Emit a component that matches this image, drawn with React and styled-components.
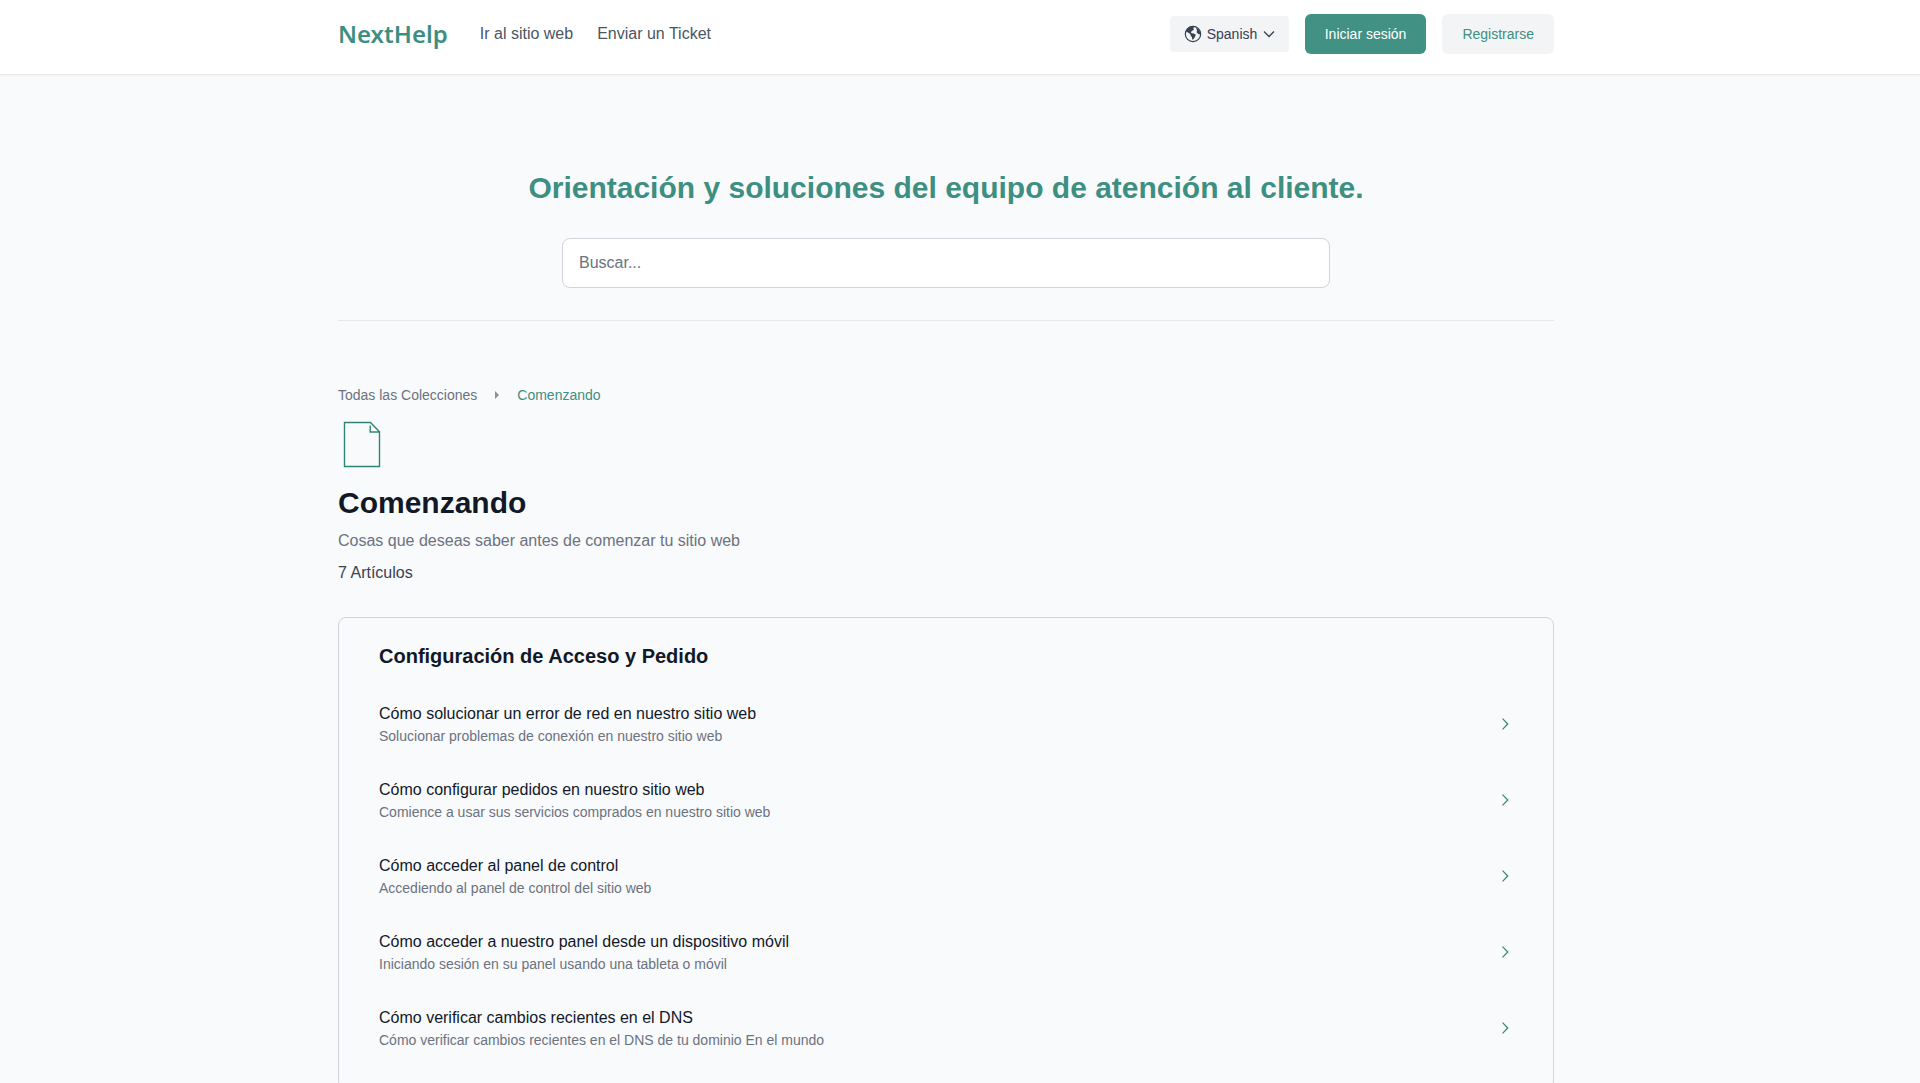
import React, { useState } from "react";

import styled, { createGlobalStyle } from "styled-components";

const GlobalStyle = createGlobalStyle`
  *, *::before, *::after {
    box-sizing: border-box;
  }

  body {
    margin: 0;
    background-color: #f9fafc;
    color: #111827;
    font-family: "Liberation Sans", Arial, sans-serif;
    font-size: 16px;
    line-height: 24px;
  }

  a {
    color: inherit;
    text-decoration: none;
  }

  h1, h2, h3, p, ul, ol {
    margin: 0;
    padding: 0;
  }

  ul, ol {
    list-style: none;
  }
`;

const Header = styled.header`
  background-color: white;
  border-bottom: 1px solid #e8e9eb;
  box-shadow: 0 1px 2px rgba(0, 0, 0, 0.04);
  padding-right: 28px;
`;

const Container = styled.div`
  max-width: 1280px;
  margin: 0 auto;
  padding: 0 32px;
`;

const HeaderInner = styled(Container)`
  display: flex;
  align-items: center;
  justify-content: space-between;
  padding-top: 14px;
  padding-bottom: 20px;
`;

const Nav = styled.nav`
  display: flex;
  align-items: center;
  gap: 24px;
  color: #4b5563;
`;

const Logo = styled.a`
  margin-right: 8px;
  color: #3d8f82;
  font-family: "Noto Sans", sans-serif;
  font-size: 24px;
  font-weight: 600;
  line-height: 32px;
`;

const Actions = styled.div`
  display: flex;
  align-items: center;
  gap: 16px;
`;

const LanguagePicker = styled.label`
  display: flex;
  align-items: center;
  gap: 5px;
  padding: 8px 14px;
  border-radius: 4px;
  background-color: #f3f4f6;
  color: #374151;

  select {
    appearance: none;
    padding: 0;
    border: none;
    background: none;
    color: inherit;
    font: inherit;
    font-size: 14px;
    line-height: 20px;
    cursor: pointer;
  }
`;

const ActionButton = styled.button`
  padding: 10px 20px;
  border: none;
  border-radius: 6px;
  background-color: ${({ $primary }) => ($primary ? "#419184" : "#f3f4f6")};
  color: ${({ $primary }) => ($primary ? "white" : "#3d8f82")};
  font: inherit;
  font-size: 14px;
  line-height: 20px;
  cursor: pointer;
`;

const Main = styled.main`
  padding-right: 28px;
`;

const Hero = styled.section`
  display: flex;
  flex-direction: column;
  align-items: center;
  padding: 93px 0 32px;
  border-bottom: 1px solid #e5e7eb;
`;

const HeroTitle = styled.h1`
  color: #3d8f82;
  font-size: 30px;
  line-height: 40px;
  text-align: center;
`;

const SearchInput = styled.input`
  width: 100%;
  max-width: 768px;
  height: 50px;
  margin-top: 30px;
  padding: 0 16px;
  border: 1px solid #d1d5db;
  border-radius: 8px;
  background-color: white;
  color: #111827;
  font: inherit;

  &::placeholder {
    color: #6b7280;
    opacity: 1;
  }
`;

const Breadcrumb = styled.ol`
  display: flex;
  align-items: center;
  gap: 16px;
  padding-top: 64px;
  color: #6b7280;
  font-size: 14px;
  line-height: 20px;

  li {
    display: flex;
    align-items: center;
    gap: 16px;
  }

  [aria-current] {
    color: #3d8f82;
  }
`;

const CollectionHeader = styled.section`
  padding: 16px 0 32px;

  svg {
    display: block;
  }
`;

const CollectionTitle = styled.h2`
  margin-top: 14px;
  font-size: 30px;
  line-height: 40px;
`;

const CollectionDescription = styled.p`
  margin-top: 6px;
  color: #6b7280;
`;

const ArticleCount = styled.p`
  margin-top: 8px;
  color: #374151;
`;

const Card = styled.section`
  padding: 22px 40px;
  border: 1px solid #d1d5db;
  border-radius: 8px;
`;

const CardTitle = styled.h3`
  margin-bottom: 14px;
  font-size: 20px;
  line-height: 32px;
`;

const ArticleLink = styled.a`
  display: flex;
  align-items: center;
  justify-content: space-between;
  padding: 16px 0;

  &:hover h4 {
    color: #3d8f82;
  }
`;

const ArticleTitle = styled.h4`
  margin: 0;
  font-size: 16px;
  font-weight: normal;
  line-height: 24px;
`;

const ArticleSummary = styled.p`
  color: #6b7280;
  font-size: 14px;
  line-height: 20px;
`;

const languages = ["Spanish", "English"];

const articles = [
  {
    title: "Cómo solucionar un error de red en nuestro sitio web",
    summary: "Solucionar problemas de conexión en nuestro sitio web",
  },
  {
    title: "Cómo configurar pedidos en nuestro sitio web",
    summary: "Comience a usar sus servicios comprados en nuestro sitio web",
  },
  {
    title: "Cómo acceder al panel de control",
    summary: "Accediendo al panel de control del sitio web",
  },
  {
    title: "Cómo acceder a nuestro panel desde un dispositivo móvil",
    summary: "Iniciando sesión en su panel usando una tableta o móvil",
  },
  {
    title: "Cómo verificar cambios recientes en el DNS",
    summary: "Cómo verificar cambios recientes en el DNS de tu dominio En el mundo",
  },
];

const GlobeIcon = () => (
  <svg width="18" height="18" viewBox="0 0 18 18" aria-hidden="true">
    <circle cx="9" cy="9" r="7.7" fill="none" stroke="currentColor" strokeWidth="1.2" />
    <path
      fill="currentColor"
      d="M1.8 6.6C2.8 3.6 5.4 1.5 8.6 1.3L10.4 1.8 9.2 3.2 10 4.4 8.4 5.8 6.8 7 7.6 8.2 9.8 8.4 11.8 9.8 11.2 11.6 9.4 14.2 8.4 14.8 7.8 12 6.6 10.6 6.2 9 4 7.6ZM12 2.8 14.6 4.2 16.3 7.4 16.2 9.6 14.2 9 12.6 7.2 13 5.4Z"
    />
  </svg>
);

const ChevronDownIcon = () => (
  <svg width="12" height="12" viewBox="0 0 12 12" fill="none" stroke="currentColor" strokeWidth="1.3" aria-hidden="true">
    <path d="M1 3.5 6 8.5 11 3.5" />
  </svg>
);

const ChevronRightIcon = () => (
  <svg width="16" height="16" viewBox="0 0 16 16" fill="none" stroke="#2f8573" strokeWidth="1.2" aria-hidden="true">
    <path d="M5.5 2.7 10.8 8 5.5 13.3" />
  </svg>
);

const CaretIcon = () => (
  <svg width="8" height="8" viewBox="0 0 8 8" fill="#8b9099" aria-hidden="true">
    <path d="M2 0 6 4 2 8Z" />
  </svg>
);

const DocumentIcon = () => (
  <svg width="48" height="48" viewBox="0 0 48 48" fill="none" stroke="#2f8573" strokeWidth="1.4" aria-hidden="true">
    <path d="M6.5 1.5H32.5L41.5 10.8V45.5H6.5ZM32.2 4.5V11H41.5" />
  </svg>
);

function App() {
  const [search, setSearch] = useState("");
  const [language, setLanguage] = useState(languages[0]);

  const renderArticle = ({ title, summary }) => (
    <li key={title}>
      <ArticleLink href="#">
        <div>
          <ArticleTitle>{title}</ArticleTitle>
          <ArticleSummary>{summary}</ArticleSummary>
        </div>
        <ChevronRightIcon />
      </ArticleLink>
    </li>
  );

  return (
    <>
      <GlobalStyle />
      <Header>
        <HeaderInner>
          <Nav>
            <Logo href="#">NextHelp</Logo>
            <a href="#">Ir al sitio web</a>
            <a href="#">Enviar un Ticket</a>
          </Nav>
          <Actions>
            <LanguagePicker>
              <GlobeIcon />
              <select aria-label="Idioma" value={language} onChange={(e) => setLanguage(e.target.value)}>
                {languages.map((name) => <option key={name}>{name}</option>)}
              </select>
              <ChevronDownIcon />
            </LanguagePicker>
            <ActionButton type="button" $primary>Iniciar sesión</ActionButton>
            <ActionButton type="button">Registrarse</ActionButton>
          </Actions>
        </HeaderInner>
      </Header>

      <Main>
        <Container>
          <Hero>
            <HeroTitle>Orientación y soluciones del equipo de atención al cliente.</HeroTitle>
            <SearchInput
              type="search"
              aria-label="Buscar"
              placeholder="Buscar..."
              value={search}
              onChange={(e) => setSearch(e.target.value)}
            />
          </Hero>

          <nav>
            <Breadcrumb>
              <li><a href="#">Todas las Colecciones</a></li>
              <li>
                <CaretIcon />
                <a href="#" aria-current="page">Comenzando</a>
              </li>
            </Breadcrumb>
          </nav>

          <CollectionHeader>
            <DocumentIcon />
            <CollectionTitle>Comenzando</CollectionTitle>
            <CollectionDescription>Cosas que deseas saber antes de comenzar tu sitio web</CollectionDescription>
            <ArticleCount>7 Artículos</ArticleCount>
          </CollectionHeader>

          <Card>
            <CardTitle>Configuración de Acceso y Pedido</CardTitle>
            <ul>{articles.map(renderArticle)}</ul>
          </Card>
        </Container>
      </Main>
    </>
  );
}

export default App;
